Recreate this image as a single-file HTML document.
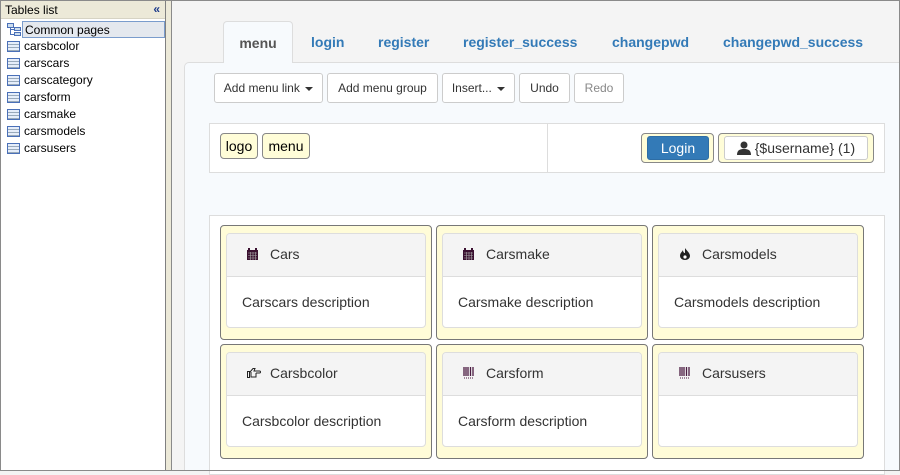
<!DOCTYPE html>
<html><head><style>
*{box-sizing:border-box;margin:0;padding:0}
body{width:900px;height:471px;overflow:hidden;font-family:"Liberation Sans",sans-serif;background:#f4f4f4;position:relative}
.frame{position:absolute;left:0;top:0;width:900px;height:471px;border:1px solid #8a8a8a;pointer-events:none;z-index:10}
.left{position:absolute;left:1px;top:1px;width:165px;height:469px;background:#fff;border-right:1px solid #808080}
.lt{height:18px;background:#ece9d8;font-size:12px;padding:2px 4px;color:#000;position:relative;border-bottom:1px solid #d6d3c4;margin-bottom:2px}
.lt span{position:absolute;right:5px;top:1px;color:#1b3a8a;font-weight:bold}
.it{height:17px;font-size:12px;padding-left:23px;position:relative;line-height:17px;color:#000}
.it i{position:absolute;left:6px;top:3px;width:13px;height:11px;border:1px solid #4a70b8;background:repeating-linear-gradient(#e6eefa 0 2px,#9ab 2px 3px)}
.sel{background:#e4e8ee;border:1px solid #7a9ccc;margin-left:21px;padding-left:2px;width:143px}
.split{position:absolute;left:166px;top:1px;width:6px;height:469px;background:#ece9d8;border-right:1px solid #8a8a8a}
.tab{position:absolute;top:21px;height:41px;font-size:14px;font-weight:bold;color:#337ab7;line-height:42px}
.content{position:absolute;left:184px;top:62px;width:716px;height:409px;background:#f7fafd;border-top:1px solid #ddd;border-left:1px solid #ddd;border-top-left-radius:5px}
.btn{position:absolute;top:73px;height:30px;border:1px solid #ccc;border-radius:3px;background:#fff;font-size:12px;line-height:28px;text-align:center;color:#333}
.car{display:inline-block;border-top:4px solid #333;border-left:4px solid transparent;border-right:4px solid transparent;vertical-align:middle;margin-left:2px}
.box{position:absolute;background:#fff;border:1px solid #ddd}
.tag{position:absolute;background:#fffdd8;border:1px solid #888;border-radius:4px;font-size:14px}
.cw{position:absolute;width:212px;height:115px;background:#fffcd8;border:1px solid #777;border-radius:4px}
.cd{position:absolute;left:5px;top:7px;width:200px;height:95px;background:#fff;border:1px solid #ddd;border-radius:4px;overflow:hidden}
.ch{height:43px;background:#f4f4f4;border-bottom:1px solid #ddd;font-size:14px;color:#333;line-height:41px;padding-left:43px;position:relative}
.ch svg{position:absolute;left:20px;top:14px}
.cb{font-size:14px;color:#333;padding:17px 0 0 15px}
</style></head><body>
<div class="left">
<div class="lt">Tables list<span>«</span></div>
<div class="it sel" style="position:relative">Common pages<i style="left:-16px;background:none;border:none;top:1px;width:14px;height:13px"><svg width="14" height="13"><rect x="0.5" y="0.5" width="6" height="4" fill="#cde" stroke="#4a70b8"/><rect x="7.5" y="4.5" width="6" height="3" fill="#cde" stroke="#4a70b8"/><rect x="7.5" y="9.5" width="6" height="3" fill="#cde" stroke="#4a70b8"/><path d="M3.5 4.5V11.5H7.5M3.5 6.5H7.5" stroke="#4a70b8" fill="none"/></svg></i></div>
<div class="it"><i></i>carsbcolor</div>
<div class="it"><i></i>carscars</div>
<div class="it"><i></i>carscategory</div>
<div class="it"><i></i>carsform</div>
<div class="it"><i></i>carsmake</div>
<div class="it"><i></i>carsmodels</div>
<div class="it"><i></i>carsusers</div>
</div>
<div class="split"></div>
<div class="content"></div>
<div class="tab" style="left:223px;width:70px;background:#f7fafd;border:1px solid #ddd;border-bottom:none;border-radius:4px 4px 0 0;color:#555;text-align:center;height:42px;z-index:2">menu</div>
<div class="tab" style="left:311px">login</div>
<div class="tab" style="left:378px">register</div>
<div class="tab" style="left:463px">register_success</div>
<div class="tab" style="left:612px">changepwd</div>
<div class="tab" style="left:723px">changepwd_success</div>
<div class="btn" style="left:214px;width:109px">Add menu link <span class="car"></span></div>
<div class="btn" style="left:327px;width:111px">Add menu group</div>
<div class="btn" style="left:442px;width:73px">Insert... <span class="car"></span></div>
<div class="btn" style="left:519px;width:51px">Undo</div>
<div class="btn" style="left:574px;width:50px;color:#888">Redo</div>
<div class="box" style="left:209px;top:123px;width:676px;height:50px"></div>
<div style="position:absolute;left:547px;top:124px;width:1px;height:48px;background:#ddd"></div>
<div class="tag" style="left:220px;top:133px;width:38px;height:26px;text-align:center;line-height:24px">logo</div>
<div class="tag" style="left:262px;top:133px;width:48px;height:26px;text-align:center;line-height:24px">menu</div>
<div class="tag" style="left:641px;top:133px;width:73px;height:30px"><div style="position:absolute;left:5px;top:2px;width:62px;height:24px;background:#337ab7;border:1px solid #2e6da4;border-radius:3px;color:#fff;text-align:center;line-height:22px">Login</div></div>
<div class="tag" style="left:718px;top:133px;width:156px;height:30px"><div style="position:absolute;left:5px;top:2px;width:144px;height:24px;background:#fff;border:1px solid #ccc;border-radius:3px;color:#333;text-align:center;line-height:22px;font-size:14px"><svg width="14" height="14" style="vertical-align:-2px"><circle cx="7" cy="4" r="3.5" fill="#333"/><path d="M0 14C0 9 3 8 7 8S14 9 14 14Z" fill="#333"/></svg> {$username} (1)</div></div>
<div class="box" style="left:209px;top:215px;width:676px;height:260px"></div>
<div class="cw" style="left:220px;top:225px"><div class="cd"><div class="ch"><svg width="12" height="12"><rect x="1" y="0" width="2" height="3" fill="#3a1030"/><rect x="8" y="0" width="2" height="3" fill="#3a1030"/><rect x="0" y="2" width="11" height="10" fill="#3a1030"/><path d="M1 5H10M1 7.5H10M1 10H10M3.5 4V12M6 4V12M8.5 4V12" stroke="#aaa" stroke-width=".6"/></svg>Cars</div><div class="cb">Carscars description</div></div></div>
<div class="cw" style="left:436px;top:225px"><div class="cd"><div class="ch"><svg width="12" height="12"><rect x="1" y="0" width="2" height="3" fill="#3a1030"/><rect x="8" y="0" width="2" height="3" fill="#3a1030"/><rect x="0" y="2" width="11" height="10" fill="#3a1030"/><path d="M1 5H10M1 7.5H10M1 10H10M3.5 4V12M6 4V12M8.5 4V12" stroke="#aaa" stroke-width=".6"/></svg>Carsmake</div><div class="cb">Carsmake description</div></div></div>
<div class="cw" style="left:652px;top:225px"><div class="cd"><div class="ch"><svg width="12" height="12"><path d="M6 0C8 3 11 5 11 8A5 4 0 0 1 1 8C1 5 3 4 4 2C4 4 5 5 6 5Z" fill="#222"/><circle cx="6" cy="9" r="1.6" fill="#fff"/></svg>Carsmodels</div><div class="cb">Carsmodels description</div></div></div>
<div class="cw" style="left:220px;top:344px"><div class="cd"><div class="ch"><svg width="14" height="12"><rect x="0.5" y="4.5" width="2" height="6" fill="none" stroke="#222"/><path d="M3 5L6 1.5H8L7 4H12.5A1 1 0 0 1 12.5 6H9M9 6V10H4V5" fill="none" stroke="#222"/></svg>Carsbcolor</div><div class="cb">Carsbcolor description</div></div></div>
<div class="cw" style="left:436px;top:344px"><div class="cd"><div class="ch"><svg width="12" height="12"><path d="M1 0V9M3 0V9M5 0V9M7.5 0V9M10 0V9" stroke="#4a1a40" stroke-width="1.3"/><path d="M1 11H11" stroke="#4a1a40" stroke-dasharray="1 1"/></svg>Carsform</div><div class="cb">Carsform description</div></div></div>
<div class="cw" style="left:652px;top:344px"><div class="cd"><div class="ch"><svg width="12" height="12"><path d="M1 0V9M3 0V9M5 0V9M7.5 0V9M10 0V9" stroke="#4a1a40" stroke-width="1.3"/><path d="M1 11H11" stroke="#4a1a40" stroke-dasharray="1 1"/></svg>Carsusers</div><div class="cb"></div></div></div>
<div class="frame"></div>
</body></html>
